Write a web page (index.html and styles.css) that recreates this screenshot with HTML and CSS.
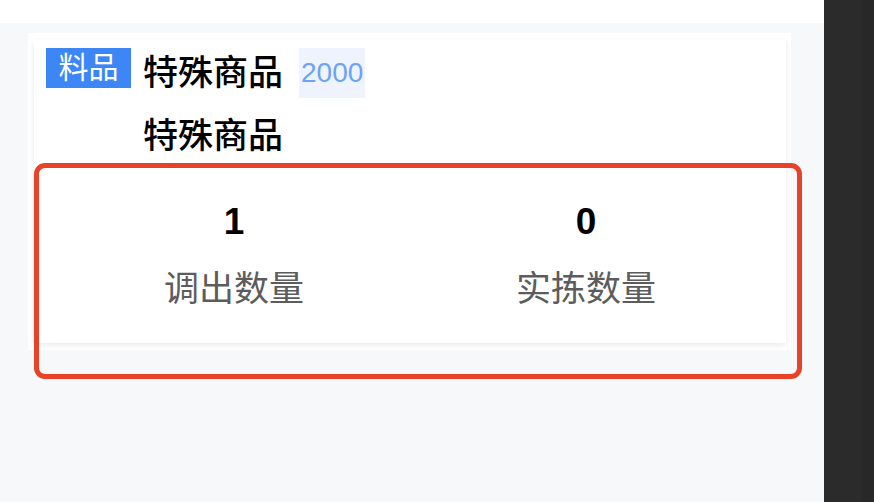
FILE: index.html
```html
<!DOCTYPE html>
<html>
<head>
  <meta charset="utf-8">
  <title>料品明细</title>
  <link rel="stylesheet" href="styles.css">
</head>
<body>
  <div class="main">
    <div class="topbar"></div>
    <div class="panel">
      <div class="card">
        <div class="head">
          <span class="tag">料品</span>
          <div class="title">
            <span class="name">特殊商品</span>
            <span class="code">2000</span>
          </div>
          <span></span>
          <div class="name sub">特殊商品</div>
        </div>
        <div class="stats">
          <div class="stat">
            <div class="num">1</div>
            <div class="label">调出数量</div>
          </div>
          <div class="stat">
            <div class="num">0</div>
            <div class="label">实拣数量</div>
          </div>
        </div>
      </div>
    </div>
    <div class="mark"></div>
  </div>
  <div class="side">
    <div class="side-edge"></div>
  </div>
</body>
</html>
```

FILE: styles.css
```css
  body {
    margin: 0;
    padding: 0;
    display: flex;
    height: 502px;
    overflow: hidden;
    font-family: "Liberation Sans", "Noto Sans CJK SC", sans-serif;
    color: #000;
  }

  .main {
    position: relative;
    flex: 1;
    background-color: #f7f8fa;
  }

  .topbar {
    height: 23px;
    background-color: #fff;
  }

  .panel {
    margin: 10px 33px 0 28px;
    padding: 7px 5px 7px 6px;
    background-color: #fff;
  }

  .card {
    background-color: #fff;
    padding: 8px 12px 34px;
    box-shadow: 0 2px 6px rgba(0, 0, 0, 0.09);
  }

  .head {
    display: grid;
    grid-template-columns: 85px auto;
    column-gap: 12px;
    align-items: start;
  }

  .tag {
    height: 40px;
    line-height: 40px;
    text-align: center;
    font-size: 30px;
    color: #fff;
    background-color: #3d86f5;
  }

  .title {
    display: flex;
    align-items: flex-start;
  }

  .name {
    font-size: 35px;
    line-height: 50px;
    font-weight: 500;
  }

  .code {
    margin-left: 16px;
    padding: 0 2px;
    line-height: 50px;
    font-size: 28px;
    color: #6ea2f4;
    background-color: #eef3fd;
  }

  .sub {
    margin-top: 18px;
    line-height: 40px;
  }

  .stats {
    display: grid;
    grid-template-columns: 1fr 1fr;
    padding: 0 12px;
    margin-top: 46px;
    text-align: center;
  }

  .num {
    font-size: 37px;
    line-height: 40px;
    font-weight: bold;
  }

  .label {
    margin-top: 27px;
    font-size: 35px;
    line-height: 40px;
    color: #5c5c5c;
  }

  .mark {
    position: absolute;
    left: 34px;
    top: 163px;
    width: 768px;
    height: 216px;
    box-sizing: border-box;
    border: 5px solid #e84228;
    border-radius: 11px;
  }

  .side {
    width: 50px;
    display: flex;
    justify-content: flex-end;
    background-color: #2b2b2b;
  }

  .side-edge {
    width: 12px;
    background-color: #282828;
  }
```
